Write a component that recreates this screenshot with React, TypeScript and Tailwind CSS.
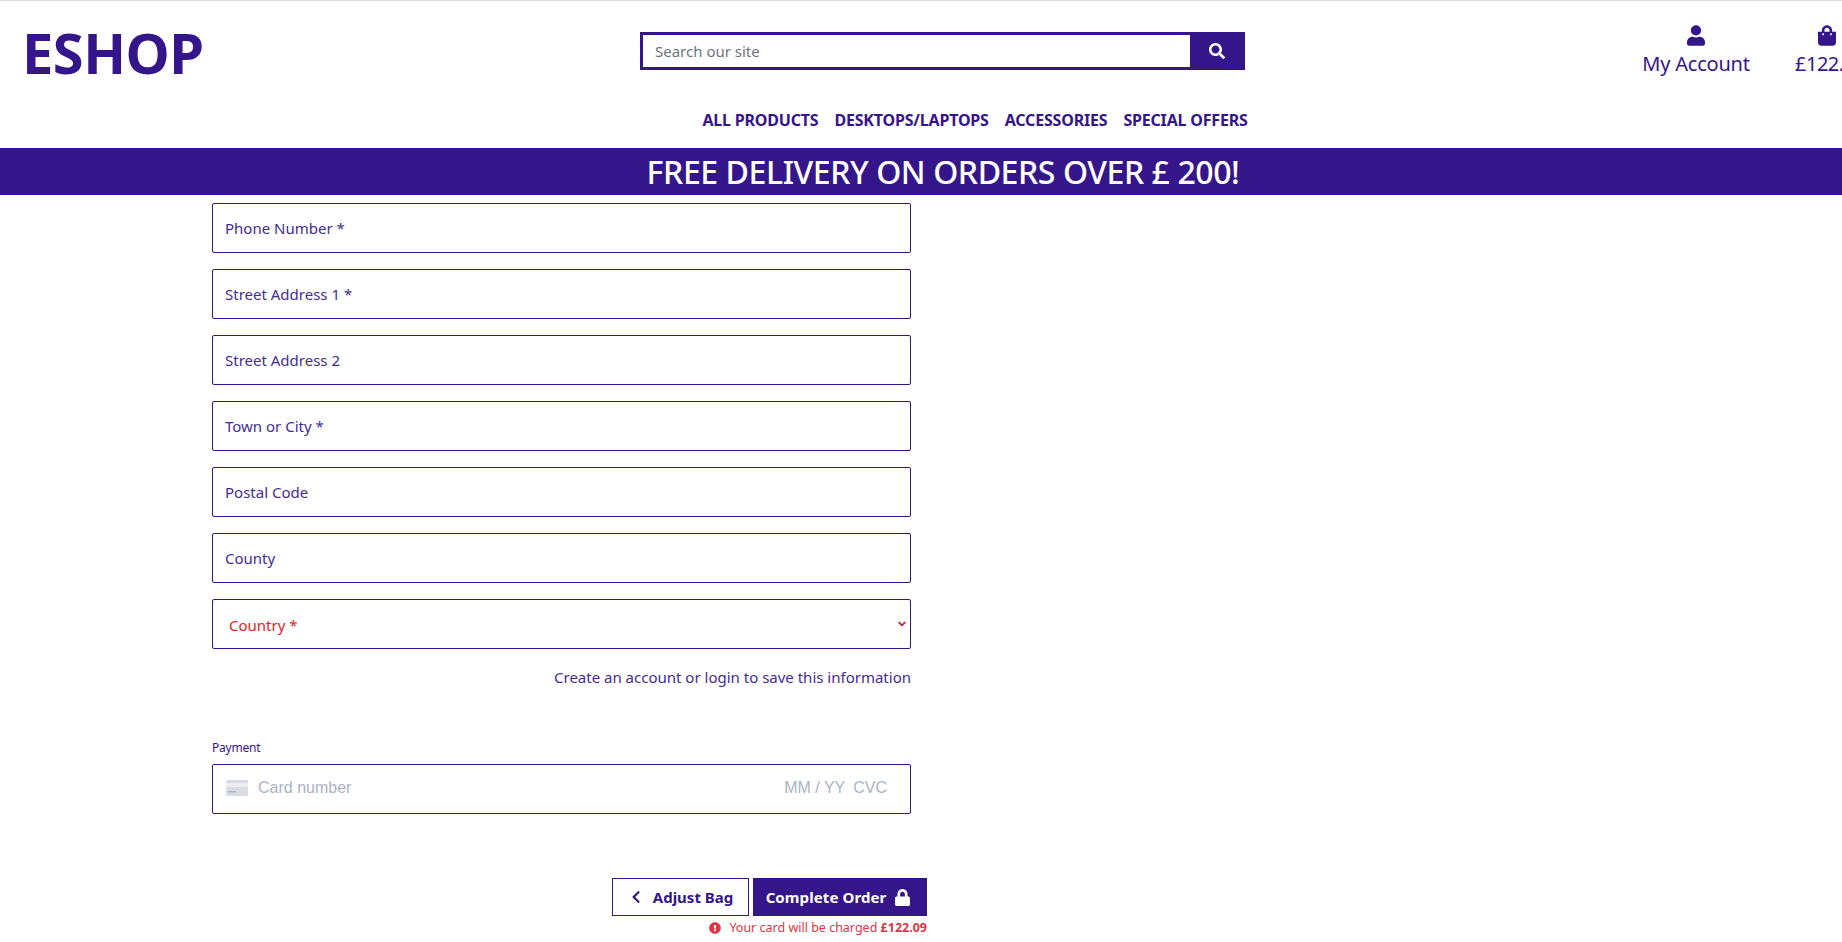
import { FaChevronDown, FaChevronLeft, FaExclamationCircle, FaLock, FaSearch, FaShoppingBag, FaUser } from 'react-icons/fa';

const fields = ['Phone Number *', 'Street Address 1 *', 'Street Address 2', 'Town or City *', 'Postal Code', 'County'];
const navLinks = ['ALL PRODUCTS', 'DESKTOPS/LAPTOPS', 'ACCESSORIES', 'SPECIAL OFFERS'];

export default function App() {
  return (
    <div className="h-screen overflow-hidden bg-white font-['Noto_Sans',sans-serif] text-[#35168a]">
      {/* Header */}
      <header className="h-[148px] border-t border-[#dcdcdc]">
        <div className="flex h-[100px]">
          <div className="w-[640px] shrink-0 pl-[22px] pt-[17px]">
            <a className="text-[56px] leading-[68px] font-bold tracking-[-0.5px]">ESHOP</a>
          </div>
          <div className="shrink-0 pt-[31px]">
            <form className="flex h-[38px] w-[605px] border-[3px] border-[#35168a]">
              <input
                className="min-w-0 flex-1 px-[12px] text-[15px] outline-none placeholder:text-[#6c757d]"
                placeholder="Search our site"
              />
              <button className="flex w-[52px] items-center justify-center bg-[#35168a] pl-[2px] text-white">
                <FaSearch className="h-[16px] w-[16px]" />
              </button>
            </form>
          </div>
          <div className="flex flex-1 pt-[24px]">
            <div className="ml-[396px] flex w-[110px] shrink-0 flex-col items-center">
              <FaUser className="h-[21px] w-[18px]" />
              <span className="mt-[5px] text-[20px] leading-[26px] whitespace-nowrap tracking-[-0.2px]">My Account</span>
            </div>
            <div className="ml-[44px] flex shrink-0 flex-col items-start">
              <FaShoppingBag className="ml-[23px] h-[21px] w-[18px]" />
              <span className="mt-[5px] text-[20px] leading-[26px] tracking-[-0.5px]">£122.09</span>
            </div>
          </div>
        </div>
        <nav className="flex justify-center gap-[16px] pl-[108px] text-[16px] leading-[38px] font-bold tracking-[-0.19px]">
          {navLinks.map((link) => (
            <a key={link}>{link}</a>
          ))}
        </nav>
      </header>

      {/* Delivery banner */}
      <div className="flex h-[47px] items-center justify-center bg-[#35168a] pl-[44px] text-[32px] font-medium tracking-[-0.42px] text-white">
        FREE DELIVERY ON ORDERS OVER £ 200!
      </div>

      {/* Checkout form */}
      <main className="ml-[212px] w-[715px] pt-[8px]">
        <div className="flex w-[699px] flex-col gap-[16px]">
          {fields.map((field) => (
            <input
              key={field}
              className="h-[50px] rounded-[2px] border border-[#35168a] px-[12px] text-[15px] outline-none placeholder:text-[#452c94]"
              placeholder={field}
            />
          ))}
          <div className="relative">
            <select className="h-[50px] w-full appearance-none rounded-[2px] border border-[#35168a] bg-white px-[16px] pt-[3px] text-[15px] text-[#dc1f26] outline-none">
              <option>Country *</option>
            </select>
            <FaChevronDown className="absolute top-[21px] right-[4px] h-[8px] w-[10px] stroke-[40] text-[#c8102e]" />
          </div>
        </div>

        <p className="mt-[17px] w-[699px] text-right text-[15px] leading-[22px] text-[#452c94]">
          Create an account or login to save this information
        </p>

        <p className="mt-[52px] text-[12px] leading-[16px] tracking-[-0.2px]">Payment</p>
        <div className="mt-[8px] flex h-[50px] w-[699px] items-center rounded-[2px] border border-[#35168a] pr-[23px] pb-[2px] pl-[13px] font-['Liberation_Sans',sans-serif] text-[16px] text-[#aab4c4]">
          <svg width="22" height="16" viewBox="0 0 22 16" className="mr-[10px] shrink-0">
            <rect width="22" height="16" rx="1.5" fill="#d9dde3" />
            <rect y="3" width="22" height="4" fill="#eceef1" />
            <rect x="2" y="11" width="8" height="1.5" fill="#aab4c4" />
          </svg>
          <span>Card number</span>
          <span className="ml-auto">MM / YY</span>
          <span className="ml-[8px]">CVC</span>
        </div>

        <div className="mt-[64px] flex justify-end gap-[4px]">
          <a className="flex h-[38px] w-[137px] items-center justify-center gap-[12px] border border-[#35168a] pl-[3px] text-[15px] font-bold">
            <FaChevronLeft className="h-[14px] w-[10px]" />
            Adjust Bag
          </a>
          <button className="flex h-[38px] w-[174px] items-center justify-center gap-[9px] bg-[#35168a] pr-[4px] text-[15px] font-bold tracking-[0.1px] text-white">
            Complete Order
            <FaLock className="h-[17px] w-[15px]" />
          </button>
        </div>
        <p className="mt-[2px] flex items-center justify-end text-[12.5px] leading-[20px] text-[#dc3545]">
          <FaExclamationCircle className="mr-[8px] h-[12px] w-[12px]" />
          Your card will be charged&nbsp;<strong>£122.09</strong>
        </p>
      </main>
    </div>
  );
}
